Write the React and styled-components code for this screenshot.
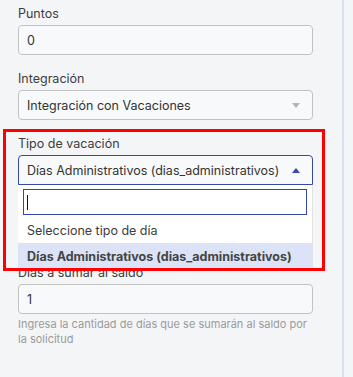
import React from "react";
import styled, { createGlobalStyle } from "styled-components";

const Global = createGlobalStyle`
  html, body { margin: 0; padding: 0; background: #f4f5f7; }
  body { font-family: Inter, "Noto Sans", sans-serif; }
  * { box-sizing: border-box; }
`;

const Page = styled.div`
  display: flex;
  height: 377px;
  overflow: hidden;
  background: #f4f5f7;
`;

const Panel = styled.div`
  width: 344px;
  padding: 6px 29px 0 18px;
  border-right: 2px solid #d9e0f1;
  display: flex;
  flex-direction: column;
`;

const Field = styled.div`
  position: relative;
  display: flex;
  flex-direction: column;
  margin-bottom: ${(p) => p.$gap ?? 16}px;
`;

const Label = styled.label`
  font-size: 12.5px;
  line-height: 16px;
  color: #3c3c3c;
  margin-bottom: 3px;
`;

const Input = styled.div`
  height: 30px;
  border: 1px solid #c2c2c2;
  border-radius: 4px;
  background: #f8f9fa;
  display: flex;
  align-items: center;
  padding: 0 8px;
  font-size: 12.5px;
  color: #333;
`;

const Select = styled(Input)`
  justify-content: space-between;
  border-color: ${(p) => (p.$open ? "#3549a8" : "#c2c2c2")};
  border-radius: ${(p) => (p.$open ? "4px 4px 0 0" : "4px")};
`;

const Arrow = styled.span`
  width: 0;
  height: 0;
  margin-right: 4px;
  border-left: 4px solid transparent;
  border-right: 4px solid transparent;
  ${(p) =>
    p.$up
      ? `border-bottom: 5px solid #3549a8;`
      : `border-top: 5px solid #b4b4b4;`}
`;

const Dropdown = styled.div`
  position: absolute;
  top: 100%;
  left: 0;
  right: 0;
  background: #ffffff;
  border-right: 1px solid #e3e3e3;
  padding: 4px 5px 0 5px;
  z-index: 2;
`;

const Search = styled.div`
  height: 26px;
  border: 1.5px solid #3549a8;
  display: flex;
  align-items: center;
  padding-left: 3px;
  margin-bottom: 2px;
`;

const Caret = styled.span`
  width: 1px;
  height: 15px;
  background: #111;
`;

const Option = styled.div`
  margin: 0 -5px;
  height: 26px;
  display: flex;
  align-items: center;
  padding-left: 9px;
  font-size: 12.5px;
  color: ${(p) => (p.$active ? "#444" : "#3c3c3c")};
  font-weight: ${(p) => (p.$active ? 700 : 400)};
  background: ${(p) => (p.$active ? "#dce3f7" : "transparent")};
`;

const Highlight = styled.div`
  position: absolute;
  top: -7px;
  left: -15px;
  width: 322px;
  height: 142px;
  border: 3px solid #ff0000;
  z-index: 3;
  pointer-events: none;
`;

const Help = styled.div`
  margin-top: 3px;
  font-size: 11px;
  line-height: 15px;
  color: #9b9b9b;
`;

const Rail = styled.div`
  flex: 1;
  background: #f4f5f7;
`;

export default function App() {
  return (
    <>
      <Global />
      <Page>
        <Panel>
          <Field>
            <Label>Puntos</Label>
            <Input>0</Input>
          </Field>
          <Field>
            <Label>Integración</Label>
            <Select>
              Integración con Vacaciones
              <Arrow />
            </Select>
          </Field>
          <Field $gap={80}>
            <Label>Tipo de vacación</Label>
            <Select $open>
              Días Administrativos (dias_administrativos)
              <Arrow $up />
            </Select>
            <Dropdown>
              <Search>
                <Caret />
              </Search>
              <Option>Seleccione tipo de día</Option>
              <Option $active>Días Administrativos (dias_administrativos)</Option>
            </Dropdown>
            <Highlight />
          </Field>
          <Field>
            <Label>Días a sumar al saldo</Label>
            <Input>1</Input>
            <Help>Ingresa la cantidad de días que se sumarán al saldo por la solicitud</Help>
          </Field>
        </Panel>
        <Rail />
      </Page>
    </>
  );
}
